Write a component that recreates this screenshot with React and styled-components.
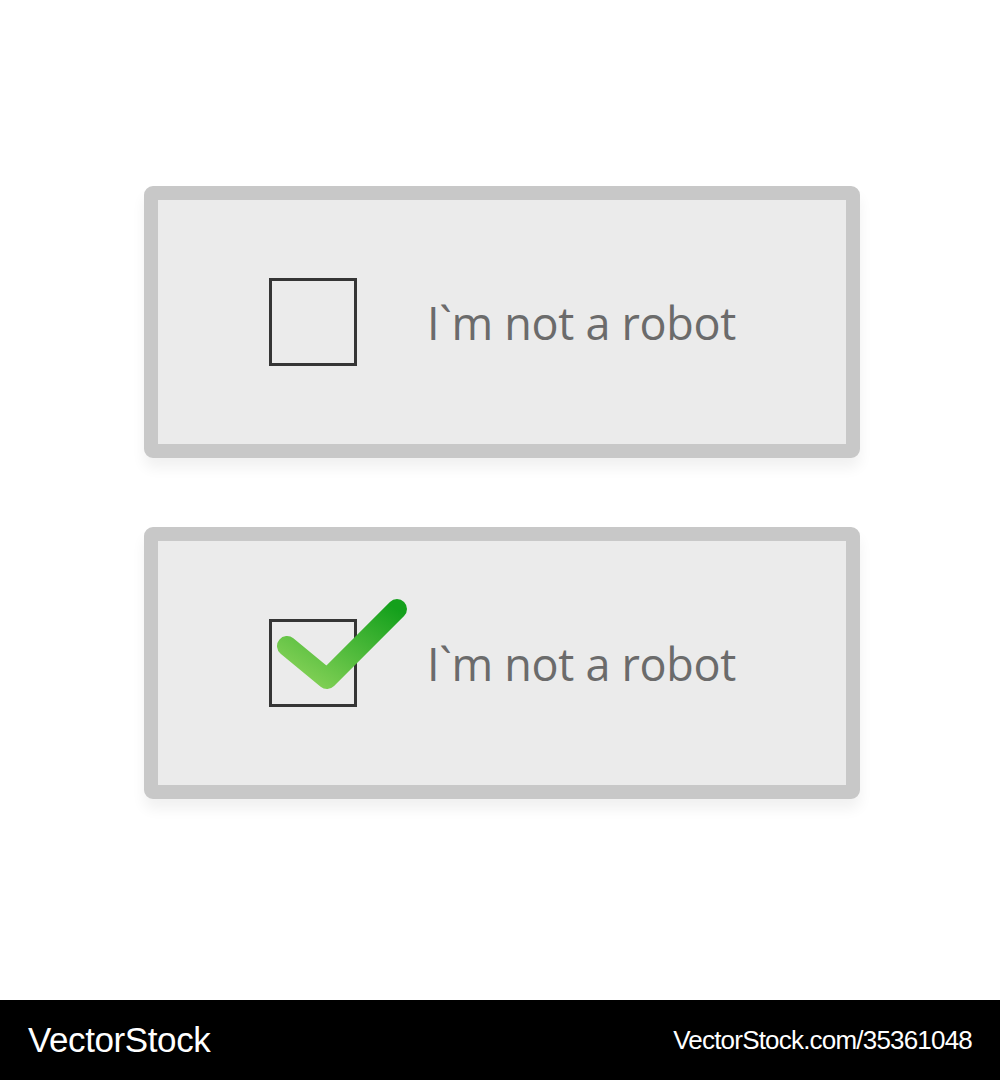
import styled, { createGlobalStyle } from 'styled-components'

const GlobalStyle = createGlobalStyle`
    html, body {
        margin: 0;
        padding: 0;
        background: #FFFFFF;
        font-family: "Open Sans", "Liberation Sans", sans-serif;
    }
`

function Check() {
    return (
        <Tick width="140" height="120" viewBox="0 0 140 120">
            <defs>
                <linearGradient id="tickFill" x1="0" y1="1" x2="1" y2="0">
                    <stop offset="0" stopColor="#8ad45a" />
                    <stop offset="1" stopColor="#14a01c" />
                </linearGradient>
            </defs>
            <polyline
                points="13,61 53,94 123,24"
                fill="none"
                stroke="url(#tickFill)"
                strokeWidth="20"
                strokeLinecap="round"
                strokeLinejoin="round"
            />
        </Tick>
    )
}

function Captcha({ checked }) {
    return (
        <Card>
            <Box>{checked && <Check />}</Box>
            <Label>I`m not a robot</Label>
        </Card>
    )
}

export default function App() {
    return (
        <>
            <GlobalStyle />
            <Page>
                <Captcha />
                <Captcha checked />
            </Page>
            <Footer>
                <Brand>VectorStock</Brand>
                <Ref>VectorStock.com/35361048</Ref>
            </Footer>
        </>
    )
}

const Page = styled.div`
    display: flex;
    flex-direction: column;
    gap: 69px;
    height: 1000px;
    padding: 186px 0 0 144px;
    box-sizing: border-box;
`

const Card = styled.div`
    display: flex;
    align-items: center;
    width: 716px;
    height: 272px;
    box-sizing: border-box;
    padding-left: 111px;
    border: 14px solid #C8C8C8;
    border-radius: 9px;
    background: #EBEBEB;
    box-shadow: 0 10px 14px rgba(0, 0, 0, 0.06);
`

const Box = styled.div`
    position: relative;
    width: 88px;
    height: 88px;
    box-sizing: border-box;
    border: 3px solid #353535;
    flex-shrink: 0;
`

const Tick = styled.svg`
    position: absolute;
    left: 2px;
    top: -37px;
`

const Label = styled.div`
    margin-left: 70px;
    font-size: 45px;
    color: #6B6B6B;
    letter-spacing: -0.3px;
`

const Footer = styled.div`
    display: flex;
    justify-content: space-between;
    align-items: center;
    height: 80px;
    padding: 0 28px;
    background: #000000;
    color: #FFFFFF;
    font-family: "Liberation Sans", Arial, sans-serif;
`

const Brand = styled.div`
    font-size: 35px;
    letter-spacing: -0.4px;
`

const Ref = styled.div`
    font-size: 26px;
    letter-spacing: -0.8px;
`
